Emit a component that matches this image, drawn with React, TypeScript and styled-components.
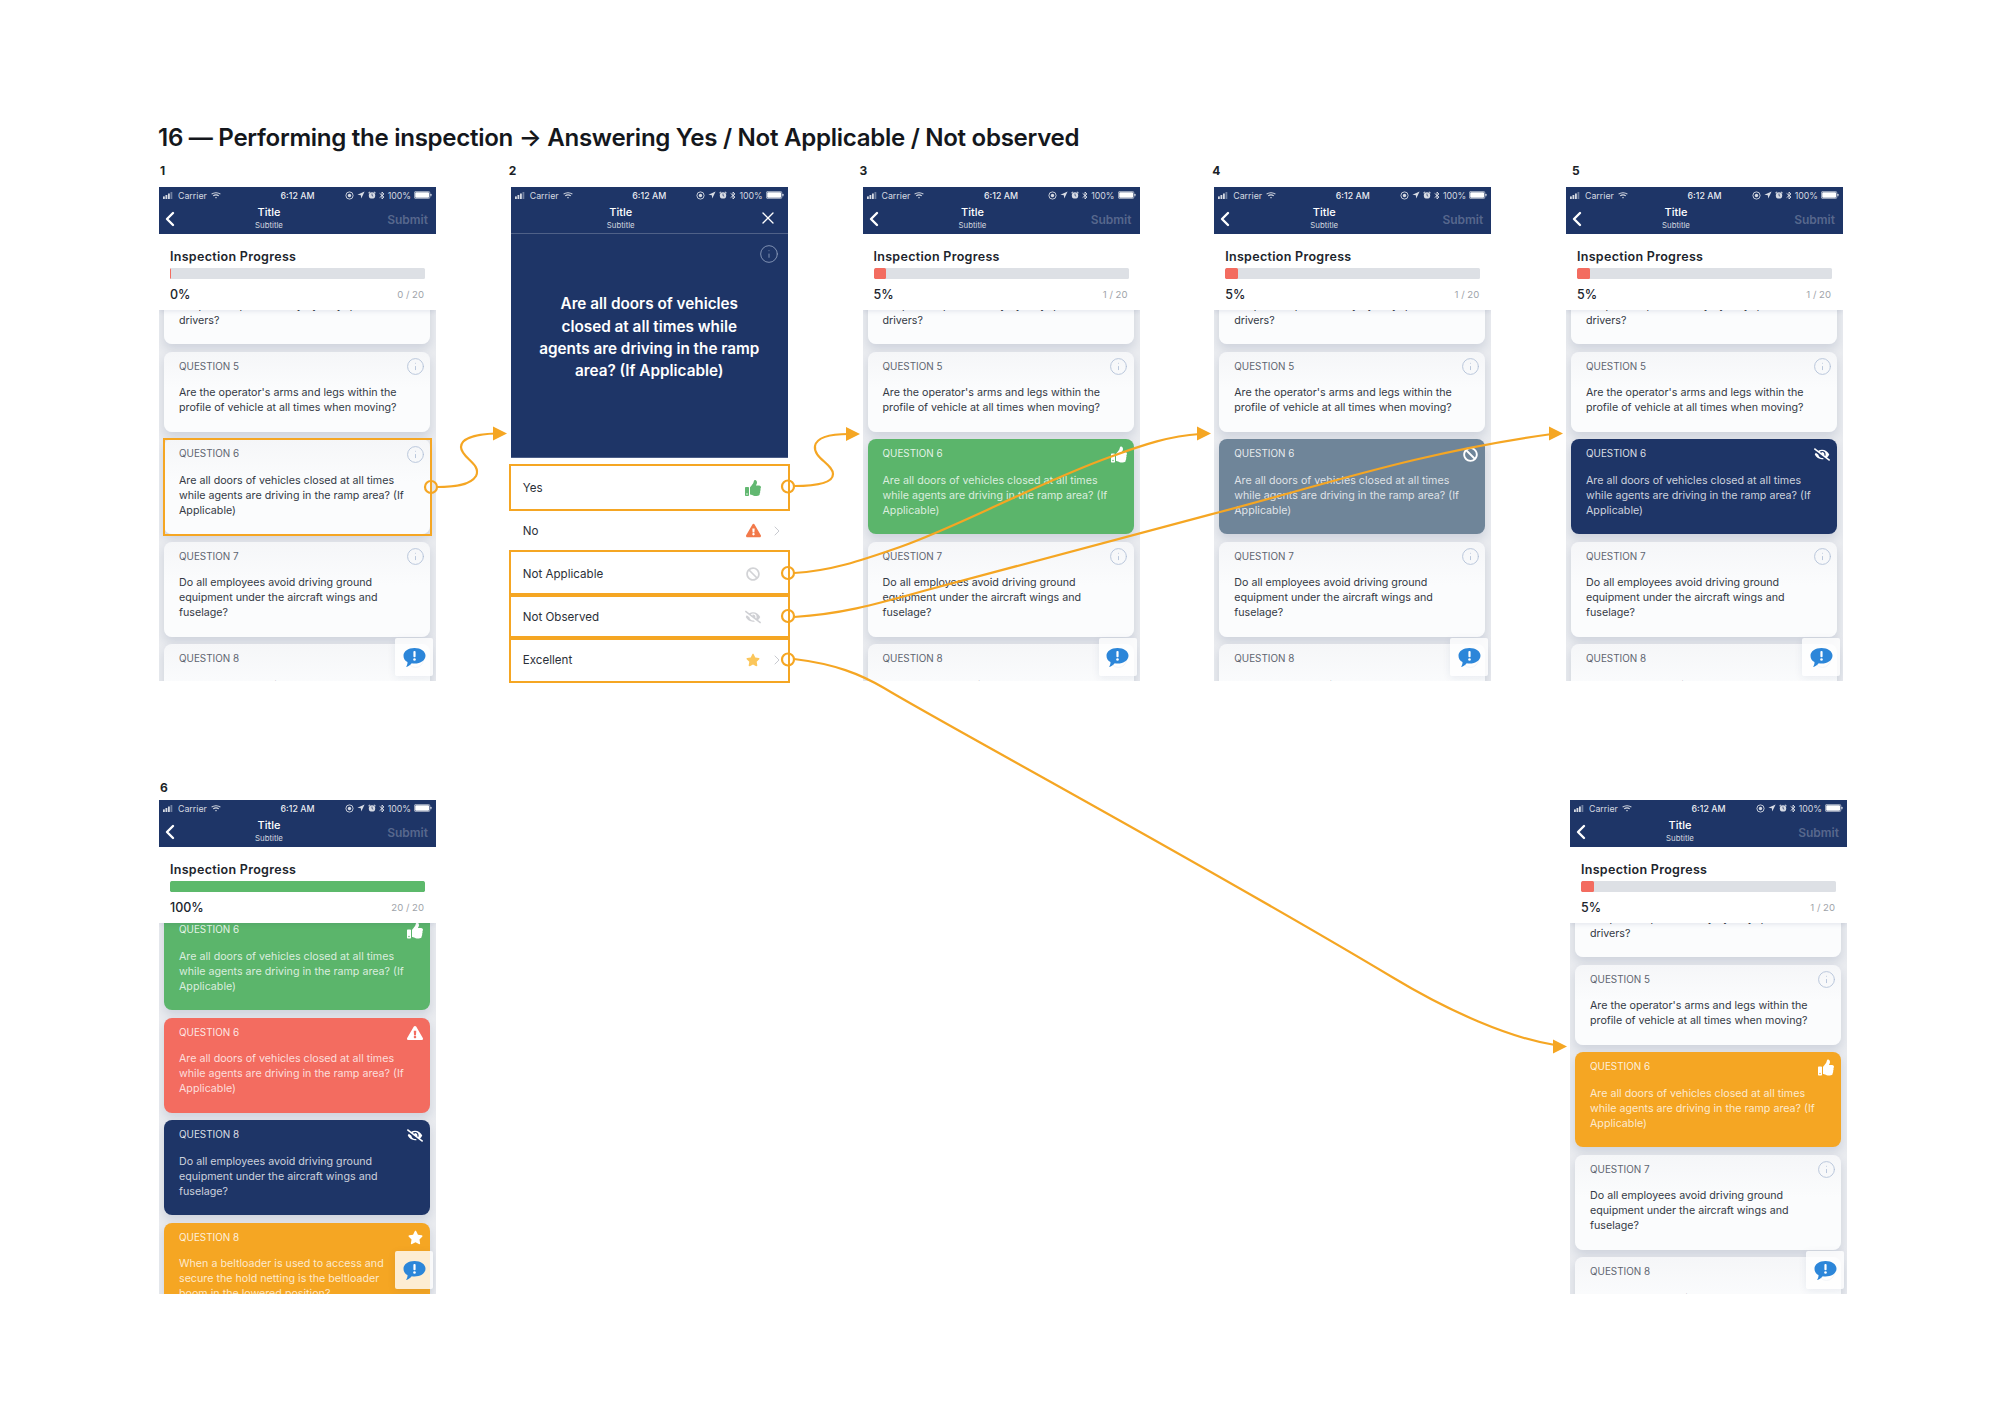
import React from 'react';
import styled, { createGlobalStyle } from 'styled-components';
import { ChevronLeft, ChevronRight, Info, X } from 'lucide-react';
import { FaThumbsUp, FaExclamationTriangle, FaBan, FaEyeSlash, FaStar } from 'react-icons/fa';

const NAVY = '#1E3567';
const ORANGE = '#F5A623';

type Tone = 'plain' | 'green' | 'red' | 'navy' | 'slate' | 'amber';
type Mark = 'info' | 'thumb' | 'warn' | 'ban' | 'eye' | 'star';

const toneColors: Record<Tone, string> = {
  plain: 'linear-gradient(#F5F6F8, #FBFCFD 45%)',
  green: '#5BB56B',
  red: '#F36C60',
  navy: NAVY,
  slate: '#6F8599',
  amber: '#F5A623',
};

const TEXT = {
  drivers: 'Are all vehicles and ground equipment in the ramp area operated only by fully qualified drivers?',
  arms: "Are the operator's arms and legs within the profile of vehicle at all times when moving?",
  doors: 'Are all doors of vehicles closed at all times while agents are driving in the ramp area? (If Applicable)',
  wings: 'Do all employees avoid driving ground equipment under the aircraft wings and fuselage?',
  belt: 'When a beltloader is used to access and secure the hold netting is the beltloader boom in the lowered position?',
};

const GlobalStyle = createGlobalStyle`
  html, body {
    margin: 0;
    background: #fff;
    font-family: Inter, "Liberation Sans", sans-serif;
    color: #1b1f27;
  }
`;

const Page = styled.div`
  position: relative;
  box-sizing: border-box;
  width: 2000px;
  height: 1413px;
  overflow: hidden;
  padding: 121px 153px 0 159px;
`;

const Heading = styled.h1`
  margin: 0 0 8px -1px;
  font-size: 24.1px;
  line-height: 33px;
  font-weight: 600;
  letter-spacing: -0.3px;
  color: #14171c;
  white-space: nowrap;
`;

const Row = styled.div<{ $spread?: boolean }>`
  display: flex;
  gap: 74.75px;
  justify-content: ${(p) => (p.$spread ? 'space-between' : 'flex-start')};
`;

const SecondRow = styled(Row)`
  margin-top: 98px;
`;

const Column = styled.div`
  width: 277px;
`;

const StepLabel = styled.div<{ $tight?: boolean; $indent?: number }>`
  height: 17px;
  line-height: 17px;
  margin-left: ${(p) => p.$indent ?? 1}px;
  margin-bottom: ${(p) => (p.$tight ? '4px' : '8px')};
  font-size: 12px;
  font-weight: 700;
  color: #1b1f27;
`;

const Phone = styled.div<{ $open?: boolean }>`
  position: relative;
  height: 494px;
  overflow: ${(p) => (p.$open ? 'visible' : 'hidden')};
  background: #fff;
  display: flex;
  flex-direction: column;
`;

const Header = styled.div<{ $line?: boolean }>`
  flex: none;
  height: 47px;
  box-sizing: border-box;
  background: ${NAVY};
  color: #fff;
  border-bottom: 1px solid ${(p) => (p.$line ? 'rgba(255,255,255,.22)' : NAVY)};
`;

const StatusRow = styled.div`
  height: 16px;
  display: grid;
  grid-template-columns: 1fr auto 1fr;
  align-items: center;
  padding: 0 4px;
  font-size: 8.8px;
  color: rgba(255, 255, 255, 0.82);
`;

const StatusSide = styled.div<{ $end?: boolean }>`
  display: flex;
  align-items: center;
  gap: ${(p) => (p.$end ? '3px' : '4px')};
  justify-content: ${(p) => (p.$end ? 'flex-end' : 'flex-start')};
`;

const Clock = styled.span`
  font-weight: 500;
  color: rgba(255, 255, 255, 0.92);
`;

const NavRow = styled.div`
  height: 30px;
  display: flex;
  align-items: center;
`;

const NavLeft = styled.div`
  width: 80px;
  display: flex;
  align-items: center;
  margin: 1px 0 0 -1px;
`;

const NavTitle = styled.div`
  width: 60px;
  margin-left: 1px;
  padding-top: 2px;
  text-align: center;
`;

const TitleMain = styled.div`
  font-size: 11px;
  line-height: 13px;
  font-weight: 500;
  margin-top: -1px;
`;

const TitleSub = styled.div`
  font-size: 7.8px;
  line-height: 12px;
  color: rgba(255, 255, 255, 0.8);
`;

const NavRight = styled.div`
  flex: 1;
  display: flex;
  justify-content: flex-end;
  align-items: center;
  padding-right: 8px;
  margin-top: 2px;
  font-size: 12px;
  font-weight: 600;
  color: rgba(255, 255, 255, 0.26);
`;

const CloseSlot = styled(NavRight)`
  padding-right: 10px;
  margin-top: 0;
  color: #fff;
`;

const ProgressPanel = styled.div`
  position: relative;
  z-index: 2;
  flex: none;
  height: 76px;
  box-sizing: border-box;
  padding: 15px 11px 0;
  background: #fff;
  box-shadow: 0 1px 5px rgba(30, 53, 103, 0.12);
`;

const ProgressTitle = styled.div`
  font-size: 12.5px;
  line-height: 16px;
  font-weight: 600;
  letter-spacing: 0.3px;
  color: #20242c;
`;

const Bar = styled.div`
  height: 11px;
  margin-top: 3px;
  border-radius: 1.5px;
  background: #DDE0E5;
  overflow: hidden;
`;

const BarFill = styled.div<{ $color: string }>`
  height: 100%;
  border-radius: 1.5px;
  background: ${(p) => p.$color};
`;

const ProgressFoot = styled.div`
  display: flex;
  justify-content: space-between;
  align-items: center;
  height: 16px;
  margin-top: 7px;
`;

const Percent = styled.span`
  font-size: 12.5px;
  font-weight: 500;
  color: #20242c;
`;

const Count = styled.span`
  font-size: 9.6px;
  color: #a0a4aa;
  padding-right: 1px;
`;

const CardList = styled.div<{ $shift: number }>`
  flex: 1;
  min-height: 0;
  display: flex;
  flex-direction: column;
  gap: 7.5px;
  padding: 0 6px 0 5px;
  margin-top: ${(p) => p.$shift}px;
  background: #E9EBEF;
`;

const Card = styled.div<{ $tone: Tone; $marked?: boolean }>`
  position: relative;
  flex: none;
  box-sizing: border-box;
  padding: 7px 23px 16.5px 15px;
  border-radius: 8px;
  background: ${(p) => toneColors[p.$tone]};
  box-shadow: 0 5px 10px rgba(30, 53, 103, 0.13);
  color: ${(p) => (p.$tone === 'plain' ? '#343A45' : 'rgba(255,255,255,.78)')};

  ${(p) =>
    p.$marked &&
    `&::after {
      content: '';
      position: absolute;
      inset: -1.5px;
      border: 2px solid ${ORANGE};
    }`}
`;

const CardHead = styled.div`
  height: 14px;
  margin-right: -16px;
  margin-bottom: 12.5px;
  display: flex;
  justify-content: space-between;
  align-items: flex-start;
`;

const CardLabel = styled.span<{ $plain: boolean }>`
  font-size: 9.9px;
  line-height: 14px;
  color: ${(p) => (p.$plain ? '#5E6570' : 'rgba(255,255,255,.85)')};
`;

const CardIcon = styled.span<{ $plain: boolean }>`
  width: 16px;
  height: 16px;
  display: flex;
  align-items: center;
  justify-content: center;
  flex: none;
  color: ${(p) => (p.$plain ? '#B4C2D8' : '#fff')};
`;

const CardText = styled.div`
  font-size: 10.7px;
  line-height: 15px;
`;

const ChatButton = styled.div`
  position: absolute;
  z-index: 3;
  right: 3px;
  bottom: 5px;
  box-sizing: border-box;
  width: 38px;
  height: 38px;
  padding-top: 2px;
  display: flex;
  align-items: center;
  justify-content: center;
  border-radius: 2px;
  background: rgba(255, 255, 255, 0.8);
  box-shadow: 0 2px 8px rgba(30, 53, 103, 0.08);
`;

const QuestionPanel = styled.div`
  position: relative;
  flex: none;
  height: 224px;
  box-sizing: border-box;
  padding: 0 26px 15px;
  display: flex;
  align-items: center;
  justify-content: center;
  background: ${NAVY};
  border-bottom: 1px solid #4a5d88;
  color: #fff;
  text-align: center;
  font-size: 15.3px;
  line-height: 22.3px;
  font-weight: 600;
`;

const PanelInfo = styled.span`
  position: absolute;
  top: 10px;
  right: 9px;
  display: flex;
  color: #93a2c0;
`;

const OptionList = styled.div`
  margin-top: 8px;
`;

const Option = styled.div<{ $marked?: boolean }>`
  position: relative;
  height: 43px;
  display: flex;
  align-items: center;
  padding-left: 12px;
  font-size: 11.6px;
  color: #2b3038;
  outline: ${(p) => (p.$marked ? `2px solid ${ORANGE}` : 'none')};
  outline-offset: 0;
`;

const OptionName = styled.span`
  flex: 1;
`;

const OptionIcon = styled.span<{ $color: string }>`
  width: 17px;
  height: 17px;
  display: flex;
  align-items: center;
  justify-content: center;
  margin-right: 6px;
  color: ${(p) => p.$color};
`;

const OptionArrow = styled.span`
  width: 20px;
  box-sizing: border-box;
  padding-left: 1px;
  display: flex;
  justify-content: flex-start;
  color: #c8cad0;
`;

const Overlay = styled.svg`
  position: absolute;
  z-index: 5;
  top: 0;
  left: 0;
  pointer-events: none;
`;

const SignalBars = () => (
  <svg width="11" height="7" viewBox="0 0 11 7" fill="currentColor">
    <rect x="0" y="4.4" width="1.8" height="2.6" />
    <rect x="2.5" y="3" width="1.8" height="4" />
    <rect x="5" y="1.5" width="1.8" height="5.5" />
    <rect x="7.5" y="0" width="1.8" height="7" opacity=".45" />
  </svg>
);

const Wifi = () => (
  <svg width="10" height="7" viewBox="0 0 10 7" fill="none" stroke="currentColor" strokeWidth="1.1">
    <path d="M.6 2.2C3 .2 7 .2 9.4 2.2" />
    <path d="M2.2 3.9c1.6-1.2 4-1.2 5.6 0" />
    <path d="M5 6.6 3.9 5.5c.6-.5 1.6-.5 2.2 0z" fill="currentColor" stroke="none" />
  </svg>
);

const LockRing = () => (
  <svg width="9" height="9" viewBox="0 0 9 9" fill="none" stroke="currentColor">
    <circle cx="4.5" cy="4.5" r="3.6" strokeWidth=".9" />
    <circle cx="4.5" cy="4.5" r="1.7" fill="currentColor" stroke="none" />
  </svg>
);

const Locate = () => (
  <svg width="8" height="8" viewBox="0 0 8 8" fill="currentColor">
    <path d="M7.6.4 .4 3.7l3.4.5.5 3.4z" />
  </svg>
);

const Alarm = () => (
  <svg width="8" height="8" viewBox="0 0 8 8" fill="currentColor">
    <circle cx="4" cy="4.4" r="3.2" />
    <path d="M.2 1.8 1.8.4 2.4 1 .8 2.4zM7.8 1.8 6.2.4 5.6 1l1.6 1.4z" />
    <path d="M4 2.6v2l1.2.6" stroke={NAVY} strokeWidth=".7" fill="none" />
  </svg>
);

const Bluetooth = () => (
  <svg width="6" height="9" viewBox="0 0 6 9" fill="none" stroke="currentColor" strokeWidth=".9">
    <path d="M.6 2.4 5 6 3 8V1l2 2L.6 6.6" />
  </svg>
);

const Battery = () => (
  <svg width="18" height="8" viewBox="0 0 18 8">
    <rect x=".4" y=".4" width="15.4" height="7.2" rx="1.4" fill="none" stroke="currentColor" strokeWidth=".7" />
    <rect x="1.2" y="1.2" width="13.8" height="5.6" rx=".7" fill="#fff" />
    <rect x="16.4" y="2.7" width="1.1" height="2.6" rx=".5" fill="currentColor" />
  </svg>
);

const ChatBubble = () => (
  <svg width="23" height="20" viewBox="0 0 23 20">
    <path
      fill="#2C86D9"
      d="M11.5 0C17.8 0 22.500 3.300 22.500 7.700c0 4.400-4.700 7.800-11 7.800-1 0-1.900-.1-2.800-.3-1.300 1.700-3.300 3.300-5.700 3.800 .9-1.300 1.600-2.800 1.500-4.900C1.900 12.800.5 10.400.5 7.700.5 3.300 5.200 0 11.500 0z"
    />
    <rect x="10.400" y="3" width="2.200" height="6.200" rx="1" fill="#fff" />
    <circle cx="11.500" cy="11.500" r="1.300" fill="#fff" />
  </svg>
);

const StatusBar = () => (
  <StatusRow>
    <StatusSide>
      <SignalBars />
      <span>Carrier</span>
      <Wifi />
    </StatusSide>
    <Clock>6:12 AM</Clock>
    <StatusSide $end>
      <LockRing />
      <Locate />
      <Alarm />
      <Bluetooth />
      <span>100%</span>
      <Battery />
    </StatusSide>
  </StatusRow>
);

const markIcon = (mark: Mark) => {
  switch (mark) {
    case 'thumb':
      return <FaThumbsUp size={17} />;
    case 'warn':
      return <FaExclamationTriangle size={16} />;
    case 'ban':
      return <FaBan size={15} />;
    case 'eye':
      return <FaEyeSlash size={17} />;
    case 'star':
      return <FaStar size={15} />;
    default:
      return <Info size={19} strokeWidth={1.15} style={{ flex: 'none' }} />;
  }
};

type CardData = {
  label: string;
  text: string;
  tone?: Tone;
  mark?: Mark;
  marked?: boolean;
};

const QuestionCard = ({ label, text, tone = 'plain', mark = 'info', marked }: CardData) => (
  <Card $tone={tone} $marked={marked}>
    <CardHead>
      <CardLabel $plain={tone === 'plain'}>{label}</CardLabel>
      <CardIcon $plain={tone === 'plain'}>{markIcon(mark)}</CardIcon>
    </CardHead>
    <CardText>{text}</CardText>
  </Card>
);

type ScreenProps = {
  percent: number;
  count: string;
  fill: string;
  shift: number;
  cards: CardData[];
};

const ListScreen = ({ percent, count, fill, shift, cards }: ScreenProps) => (
  <Phone>
    <Header>
      <StatusBar />
      <NavRow>
        <NavLeft>
          <ChevronLeft size={24} strokeWidth={2.4} />
        </NavLeft>
        <NavTitle>
          <TitleMain>Title</TitleMain>
          <TitleSub>Subtitle</TitleSub>
        </NavTitle>
        <NavRight>Submit</NavRight>
      </NavRow>
    </Header>
    <ProgressPanel>
      <ProgressTitle>Inspection Progress</ProgressTitle>
      <Bar>
        <BarFill $color={fill} style={{ width: percent === 0 ? '1px' : `${percent}%` }} />
      </Bar>
      <ProgressFoot>
        <Percent>{percent}%</Percent>
        <Count>{count}</Count>
      </ProgressFoot>
    </ProgressPanel>
    <CardList $shift={shift}>
      {cards.map((card, i) => (
        <QuestionCard key={i} {...card} />
      ))}
    </CardList>
    <ChatButton>
      <ChatBubble />
    </ChatButton>
  </Phone>
);

const answerCards = (q6: Partial<CardData>): CardData[] => [
  { label: 'QUESTION 4', text: TEXT.drivers },
  { label: 'QUESTION 5', text: TEXT.arms },
  { label: 'QUESTION 6', text: TEXT.doors, ...q6 },
  { label: 'QUESTION 7', text: TEXT.wings },
  { label: 'QUESTION 8', text: TEXT.belt },
];

const allAnswered: CardData[] = [
  { label: 'QUESTION 6', text: TEXT.doors, tone: 'green', mark: 'thumb' },
  { label: 'QUESTION 6', text: TEXT.doors, tone: 'red', mark: 'warn' },
  { label: 'QUESTION 8', text: TEXT.wings, tone: 'navy', mark: 'eye' },
  { label: 'QUESTION 8', text: TEXT.belt, tone: 'amber', mark: 'star' },
];

const options = [
  { name: 'Yes', icon: <FaThumbsUp size={16} />, color: '#62B871', marked: true },
  { name: 'No', icon: <FaExclamationTriangle size={15} />, color: '#F2794A', arrow: true },
  { name: 'Not Applicable', icon: <FaBan size={14} />, color: '#D2D3D6', marked: true },
  { name: 'Not Observed', icon: <FaEyeSlash size={16} />, color: '#CFD0D4', marked: true },
  { name: 'Excellent', icon: <FaStar size={14} />, color: '#FBC65B', marked: true, arrow: true },
];

const AnswerScreen = () => (
  <Phone $open>
    <Header $line>
      <StatusBar />
      <NavRow>
        <NavLeft />
        <NavTitle>
          <TitleMain>Title</TitleMain>
          <TitleSub>Subtitle</TitleSub>
        </NavTitle>
        <CloseSlot>
          <X size={20} strokeWidth={1.6} />
        </CloseSlot>
      </NavRow>
    </Header>
    <QuestionPanel>
      <PanelInfo>
        <Info size={20} strokeWidth={1} />
      </PanelInfo>
      Are all doors of vehicles closed at all times while agents are driving in the ramp area? (If Applicable)
    </QuestionPanel>
    <OptionList>
      {options.map((o) => (
        <Option key={o.name} $marked={o.marked}>
          <OptionName>{o.name}</OptionName>
          <OptionIcon $color={o.color}>{o.icon}</OptionIcon>
          <OptionArrow>{o.arrow && <ChevronRight size={16} strokeWidth={1.5} />}</OptionArrow>
        </Option>
      ))}
    </OptionList>
  </Phone>
);

const flows = [
  { d: 'M437 487C452 487 470 486 476 476C482 464 461 458 461 447C461 437 480 434 496 433.500', tip: [507, 433.5] },
  { d: 'M794 486C812 486 833 484 833 474C833 464 813 458 815 446C817 436 835 434 849 434', tip: [860, 434] },
  { d: 'M794 573C830 571 860 561 900 547C960 526 1040 482 1110 457C1145 444 1170 436 1200 434', tip: [1211, 433.5] },
  { d: 'M794 617C840 614 870 606 927 590C1020 565 1120 538 1220 512C1320 486 1420 452 1552 434', tip: [1563, 433.5] },
  { d: 'M794 659C835 664 860 674 884 688C940 722 1200 862 1392 977C1450 1012 1510 1038 1555 1045', tip: [1567, 1046.5] },
];

const FlowLines = () => (
  <Overlay width="2000" height="1413" viewBox="0 0 2000 1413" fill="none">
    {flows.map((f) => (
      <g key={f.d}>
        <path d={f.d} stroke={ORANGE} strokeWidth="2.200" />
        <path
          d={`M${f.tip[0]} ${f.tip[1]}l-14 -7v14z`}
          fill={ORANGE}
        />
      </g>
    ))}
    {[
      [431, 487],
      [788, 486.5],
      [788, 573],
      [788, 616],
      [788, 659.5],
    ].map(([cx, cy]) => (
      <circle key={`${cx}-${cy}`} cx={cx} cy={cy} r="6" stroke={ORANGE} strokeWidth="2.200" />
    ))}
  </Overlay>
);

export default function App() {
  return (
    <Page>
      <GlobalStyle />
      <Heading>16 — Performing the inspection → Answering Yes / Not Applicable / Not observed</Heading>
      <Row>
        <Column>
          <StepLabel>1</StepLabel>
          <ListScreen
            percent={0}
            count="0 / 20"
            fill="#F36C60"
            shift={-61}
            cards={answerCards({ marked: true })}
          />
        </Column>
        <Column>
          <StepLabel $indent={-2}>2</StepLabel>
          <AnswerScreen />
        </Column>
        <Column>
          <StepLabel $indent={-3}>3</StepLabel>
          <ListScreen
            percent={5}
            count="1 / 20"
            fill="#F36C60"
            shift={-61}
            cards={answerCards({ tone: 'green', mark: 'thumb' })}
          />
        </Column>
        <Column>
          <StepLabel $indent={-2}>4</StepLabel>
          <ListScreen
            percent={5}
            count="1 / 20"
            fill="#F36C60"
            shift={-61}
            cards={answerCards({ tone: 'slate', mark: 'ban' })}
          />
        </Column>
        <Column>
          <StepLabel $indent={6}>5</StepLabel>
          <ListScreen
            percent={5}
            count="1 / 20"
            fill="#F36C60"
            shift={-61}
            cards={answerCards({ tone: 'navy', mark: 'eye' })}
          />
        </Column>
      </Row>
      <SecondRow $spread>
        <Column>
          <StepLabel $tight>6</StepLabel>
          <ListScreen
            percent={100}
            count="20 / 20"
            fill="#5CB96B"
            shift={-8}
            cards={allAnswered}
          />
        </Column>
        <Column>
          <StepLabel $tight />
          <ListScreen
            percent={5}
            count="1 / 20"
            fill="#F36C60"
            shift={-61}
            cards={answerCards({ tone: 'amber', mark: 'thumb' })}
          />
        </Column>
      </SecondRow>
      <FlowLines />
    </Page>
  );
}
